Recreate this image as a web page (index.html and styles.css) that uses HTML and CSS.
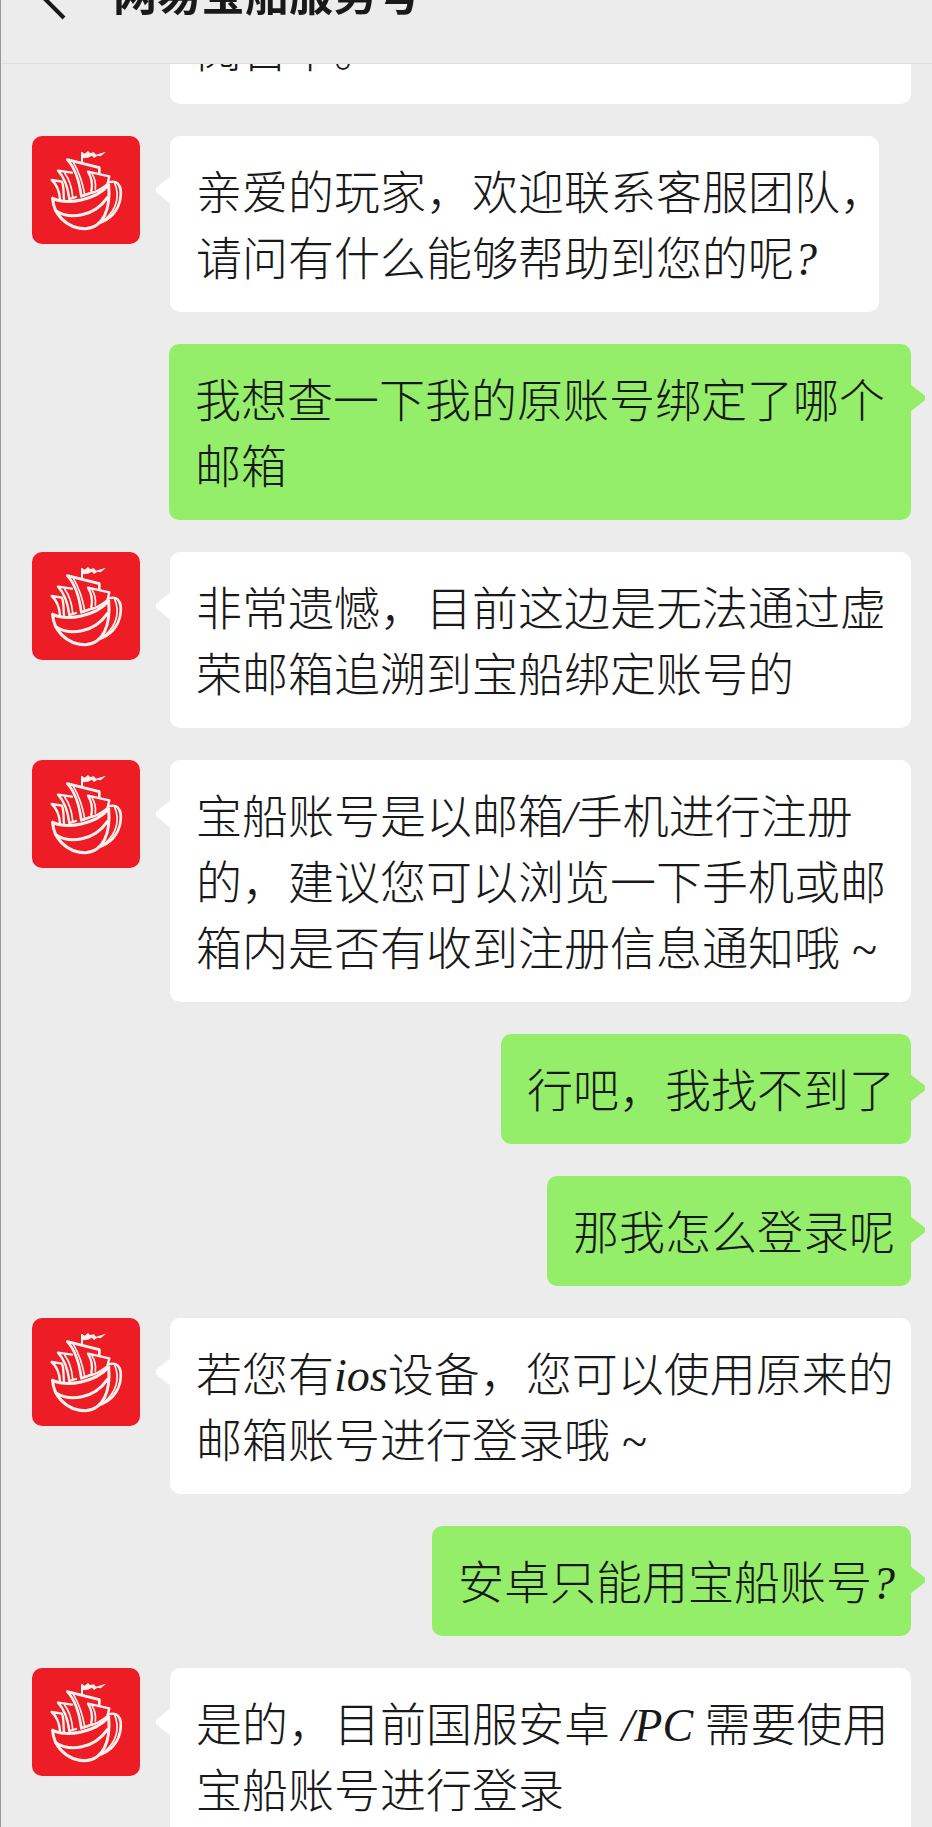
FILE: index.html
```html
<!DOCTYPE html>
<html lang="zh-CN">
<head>
    <meta charset="UTF-8">
    <meta name="viewport" content="width=device-width, initial-scale=1.0">
    <title>网易宝船服务号</title>
    <link rel="stylesheet" href="styles.css">
</head>
<body>
    <!-- ship logo, reused by every avatar -->
    <svg class="defs" aria-hidden="true">
        <symbol id="ship" viewBox="36 33 324 324">
            <g fill="none" stroke="#fff3f0" stroke-linejoin="round" stroke-linecap="round">
                <path stroke-width="9" d="M98 220 C142 240 226 226 266 180"/>
                <path stroke-width="9" d="M98 220 C100 262 134 310 196 311 C252 308 272 250 266 180"/>
                <path stroke-width="9" d="M108 258 C150 284 222 276 262 218"/>
                <path stroke-width="8" d="M270 171 C288 168 298 174 302 194 C306 240 282 276 244 292"/>
                <path stroke-width="5" d="M284 174 C300 214 290 254 254 284"/>
                <path stroke-width="7" d="M95 165 C110 178 118 200 120 222 M95 165 L126 170 C132 184 130 206 132 222"/>
                <path stroke-width="7" d="M114 137 C134 158 144 190 148 222 L168 216 M114 137 L156 143"/>
                <path stroke-width="5" d="M134 144 C150 166 156 190 158 216"/>
                <path stroke-width="8" d="M142 104 C166 130 178 168 184 214 L206 206 M142 104 L238 128 L238 142"/>
                <path stroke-width="5" d="M160 112 C178 142 188 174 194 208"/>
                <path stroke-width="7" d="M204 140 C216 160 218 180 214 198 M204 140 L268 154 L262 178 C240 194 228 202 206 206"/>
                <path stroke-width="5" d="M216 146 C226 162 228 176 226 192"/>
                <path stroke-width="6" d="M186 84 L186 112"/>
            </g>
            <path fill="#fff3f0" d="M184 80 L194 86 L204 78 L210 84 L222 82 L228 89 L258 80 L242 94 L232 92 L222 99 L216 92 L204 98 L188 100 Z"/>
        </symbol>
    </svg>

    <header class="topbar">
        <button class="back" type="button" aria-label="返回">
            <svg viewBox="0 0 32 56"><path d="M29 54 L3 28 L29 2"/></svg>
        </button>
        <h1 class="title">网易宝船服务号</h1>
    </header>

    <main class="chat">
        <div class="row rest">
            <p class="bubble">阅首下。</p>
        </div>
        <div class="row">
            <div class="avatar"><svg><use href="#ship"/></svg></div>
            <p class="bubble">亲爱的玩家，欢迎联系客服团队<span class="half">，</span><br>请问有什么能够帮助到您的呢<span class="latin">?</span></p>
        </div>
        <div class="row me">
            <p class="bubble">我想查一下我的原账号绑定了哪个邮箱</p>
        </div>
        <div class="row">
            <div class="avatar"><svg><use href="#ship"/></svg></div>
            <p class="bubble">非常遗憾，目前这边是无法通过虚荣邮箱追溯到宝船绑定账号的</p>
        </div>
        <div class="row">
            <div class="avatar"><svg><use href="#ship"/></svg></div>
            <p class="bubble">宝船账号是以邮箱<span class="latin">/</span>手机进行注册的，建议您可以浏览一下手机或邮箱内是否有收到注册信息通知哦<span class="latin"> ~</span></p>
        </div>
        <div class="row me">
            <p class="bubble">行吧，我找不到了</p>
        </div>
        <div class="row me">
            <p class="bubble">那我怎么登录呢</p>
        </div>
        <div class="row">
            <div class="avatar"><svg><use href="#ship"/></svg></div>
            <p class="bubble">若您有<span class="latin">ios</span>设备，您可以使用原来的邮箱账号进行登录哦<span class="latin"> ~</span></p>
        </div>
        <div class="row me">
            <p class="bubble">安卓只能用宝船账号<span class="latin">?</span></p>
        </div>
        <div class="row">
            <div class="avatar"><svg><use href="#ship"/></svg></div>
            <p class="bubble">是的，目前国服安卓<span class="latin"> /PC </span>需要使用宝船账号进行登录</p>
        </div>
    </main>
</body>
</html>
```

FILE: styles.css
```css
* {
    box-sizing: border-box;
}
body {
    margin: 0;
    height: 100vh;
    overflow: hidden;
    border-left: 1px solid #999;
    background: #ececec;
    color: #191919;
    font-family: "Noto Sans CJK SC", sans-serif;
    font-size: 46px;
    font-weight: 300;
}
.defs {
    position: absolute;
    width: 0;
    height: 0;
}

/* top bar stays over the scrolled messages */
.topbar {
    position: fixed;
    top: 0;
    left: 1px;
    right: 0;
    z-index: 2;
    height: 64px;
    padding: 0 34px 43px;
    display: flex;
    align-items: flex-end;
    gap: 46px;
    background: #ececec;
    border-bottom: 1px solid #dfdfdf;
}
.back {
    padding: 0;
    border: none;
    background: none;
    cursor: pointer;
}
.back svg {
    display: block;
    width: 32px;
    height: 56px;
    fill: none;
    stroke: #191919;
    stroke-width: 4;
}
.title {
    margin: 0;
    font-size: 44px;
    line-height: 56px;
    font-weight: 700;
}

.chat {
    display: flex;
    flex-direction: column;
    gap: 32px;
    margin-top: -6px;
    padding: 0 21px 32px 31px;
}
.row {
    display: flex;
    align-items: flex-start;
    gap: 30px;
}
.row.me {
    justify-content: flex-end;
    padding-left: 137px;
}
/* end of a message whose start is scrolled away */
.row.rest {
    padding-left: 138px;
}
.rest .bubble {
    flex: 1;
}
.avatar {
    flex: none;
    width: 108px;
    height: 108px;
    border-radius: 10px;
    background: #ee1c25;
}
.avatar svg {
    display: block;
    width: 100%;
    height: 100%;
}
.bubble {
    position: relative;
    margin: 0;
    padding: 20px 16px 24px 26px;
    border-radius: 10px;
    background: #fff;
    line-height: 66px;
}
.bubble::before {
    content: "";
    position: absolute;
    top: 40px;
    left: -14px;
    width: 15px;
    height: 28px;
    background: inherit;
    clip-path: polygon(100% 0, 100% 100%, 0 58%, 0 42%);
}
.me .bubble {
    background: #95ee6a;
}
.me .bubble::before {
    left: auto;
    right: -14px;
    clip-path: polygon(0 0, 0 100%, 100% 58%, 100% 42%);
}
.latin {
    font-family: "Liberation Serif", serif;
    font-style: italic;
    line-height: 1;
}
/* half-width form of a comma that ends a line */
.half {
    font-feature-settings: "halt";
}
```
